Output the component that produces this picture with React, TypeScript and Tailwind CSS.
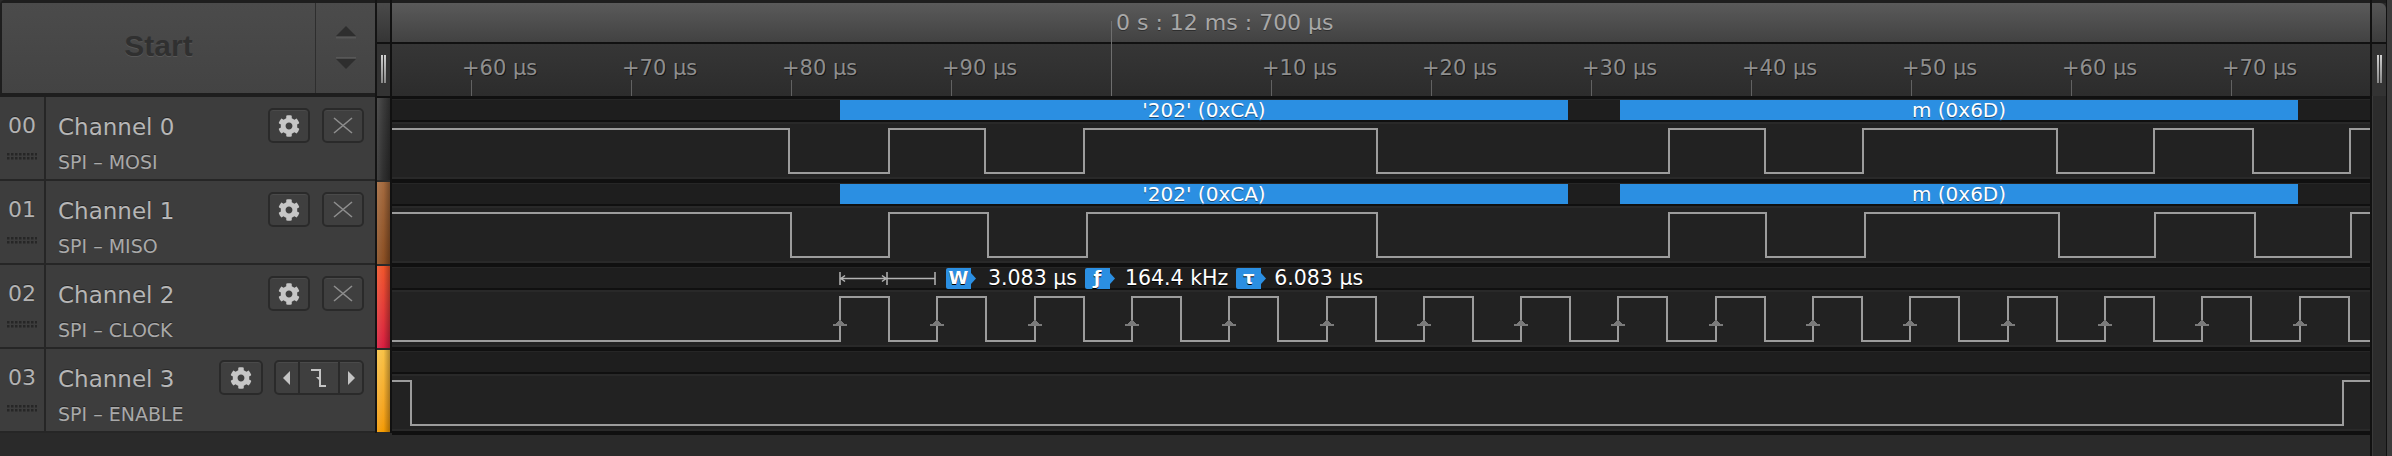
import { FaCog } from "react-icons/fa";

// waveform canvas starts at page x=392 and is 1978px wide
const LEFT = 392;
const WAVE_W = 1978;
const HI = 5;
const LO = 49;

function stepPath(startHigh: boolean, edges: number[]) {
  let level = startHigh;
  const y = (h: boolean) => (h ? HI : LO);
  let d = `M0 ${y(level)}`;
  for (const e of edges) {
    d += ` H${e - LEFT} V${y(!level)}`;
    level = !level;
  }
  return d + ` H${WAVE_W}`;
}

const clockRises = Array.from({ length: 16 }, (_, k) => Math.round(840 + 97.3 * k));
const clockEdges = clockRises.flatMap((r) => [r, Math.round(r + 49.3)]);

const mosi = [789, 889, 985, 1084, 1377, 1669, 1765, 1863, 2057, 2154, 2253, 2350];
const miso = [791, 889, 988, 1087, 1377, 1669, 1766, 1865, 2059, 2155, 2255, 2351];

const rulerLabels = ["+60 µs", "+70 µs", "+80 µs", "+90 µs", "", "+10 µs", "+20 µs", "+30 µs", "+40 µs", "+50 µs", "+60 µs", "+70 µs"];

interface Channel {
  num: string;
  name: string;
  sub: string;
  strip: string;
  path: string;
  bytes?: boolean;
  clock?: boolean;
  trigger?: boolean;
}

const channels: Channel[] = [
  { num: "00", name: "Channel 0", sub: "SPI – MOSI", strip: "bg-linear-to-b from-[#3c3c3c] to-[#2e2e2e]", path: stepPath(true, mosi), bytes: true },
  { num: "01", name: "Channel 1", sub: "SPI – MISO", strip: "bg-linear-to-b from-[#a46a3e] to-[#8a4e22]", path: stepPath(true, miso), bytes: true },
  { num: "02", name: "Channel 2", sub: "SPI – CLOCK", strip: "bg-linear-to-b from-[#f0552a] to-[#d81c40]", path: stepPath(false, clockEdges), clock: true },
  { num: "03", name: "Channel 3", sub: "SPI – ENABLE", strip: "bg-linear-to-b from-[#f8c246] to-[#f39a00]", path: stepPath(true, [411, 2343]), trigger: true },
];

function Grip() {
  return (
    <svg width="30" height="8" viewBox="0 0 30 8">
      {[0, 4, 8, 12, 16, 20, 24, 28].map((x) =>
        [0, 4].map((y) => <rect key={`${x}-${y}`} x={x} y={y} width="2.5" height="2.5" fill="#262626" />)
      )}
    </svg>
  );
}

function Btn({ children, w }: { children: React.ReactNode; w: string }) {
  return (
    <div className={`${w} h-[35px] flex items-center justify-center rounded-[5px] border-2 border-[#2a2a2a] bg-[#3f3f3f] shadow-[inset_0_1px_0_#4a4a4a]`}>
      {children}
    </div>
  );
}

function CloseIcon() {
  return (
    <svg width="20" height="17" viewBox="0 0 20 17">
      <path d="M1 1 L19 16 M19 1 L1 16" stroke="#8e8e8e" strokeWidth="1.6" fill="none" />
    </svg>
  );
}

function ChannelRow({ ch }: { ch: Channel }) {
  return (
    <div className="h-[84px] flex border-b-2 border-[#262626] bg-[#3d3d3d]">
      <div className="w-[46px] shrink-0 border-r-2 border-[#262626] flex flex-col items-center pt-[15px]">
        <span className="text-[22px] leading-[28px] text-[#b2b2b2] [text-shadow:0_-1px_0_#262626]">{ch.num}</span>
        <div className="mt-[13px]">
          <Grip />
        </div>
      </div>
      <div className="flex-1 flex pl-[12px] pr-[11px]">
        <div className="flex-1 flex flex-col pt-[16px]">
          <span className="text-[23px] leading-[28px] text-[#b6b6b6] [text-shadow:0_-1px_0_#262626]">{ch.name}</span>
          <span className="mt-[9px] text-[19px] leading-[24px] text-[#a9a9a9] [text-shadow:0_-1px_0_#262626]">{ch.sub}</span>
        </div>
        {ch.trigger ? (
          <div className="flex gap-[11px] pt-[11px]">
            <Btn w="w-[44px]">
              <FaCog size={22} color="#c6c6c6" />
            </Btn>
            <div className="w-[90px] h-[35px] flex rounded-[5px] border-2 border-[#2a2a2a] bg-[#3f3f3f] overflow-hidden shadow-[inset_0_1px_0_#4a4a4a]">
              <div className="w-[24px] flex items-center justify-center border-r-2 border-[#2a2a2a]">
                <svg width="8" height="14" viewBox="0 0 8 14">
                  <path d="M7 0 V14 L0 7 Z" fill="#c4c4c4" />
                </svg>
              </div>
              <div className="flex-1 flex items-center justify-center border-r-2 border-[#2a2a2a]">
                <svg width="18" height="20" viewBox="0 0 18 20">
                  <path d="M1 2 H10 V18 H16" stroke="#c4c4c4" strokeWidth="2" fill="none" />
                  <path d="M6 9 L10 13 L10 9 Z" fill="#c4c4c4" />
                </svg>
              </div>
              <div className="w-[22px] flex items-center justify-center">
                <svg width="8" height="14" viewBox="0 0 8 14">
                  <path d="M1 0 V14 L8 7 Z" fill="#c4c4c4" />
                </svg>
              </div>
            </div>
          </div>
        ) : (
          <div className="flex gap-[12px] pt-[11px]">
            <Btn w="w-[42px]">
              <FaCog size={22} color="#c6c6c6" />
            </Btn>
            <Btn w="w-[42px]">
              <CloseIcon />
            </Btn>
          </div>
        )}
      </div>
    </div>
  );
}

function Badge({ letter }: { letter: string }) {
  return (
    <div className="flex items-center">
      <div className="w-[25px] h-[21px] flex items-center justify-center rounded-l-[2px] bg-[#2b8fe2] text-[18px] font-bold leading-none text-white">
        {letter}
      </div>
      <svg width="5" height="21" viewBox="0 0 5 21">
        <path d="M0 5 L5 10.5 L0 16 Z" fill="#2b8fe2" />
      </svg>
    </div>
  );
}

function Measurement() {
  return (
    <div className="absolute left-[447px] top-0 h-full flex items-center text-[20.5px] leading-none text-white [text-shadow:0_1px_0_#000]">
      <svg width="97" height="21" viewBox="0 0 97 21">
        <g stroke="#b4b4b4" strokeWidth="1.5" fill="none">
          <path d="M1 4 V17 M48 4 V17 M96 4 V17 M1 10.5 H96" />
          <path d="M6 7.5 L2 10.5 L6 13.5 M43 7.5 L47 10.5 L43 13.5" />
        </g>
      </svg>
      <div className="ml-[10px]">
        <Badge letter="W" />
      </div>
      <span className="ml-[12px]">3.083 µs</span>
      <div className="ml-[8px]">
        <Badge letter="ƒ" />
      </div>
      <span className="ml-[10px]">164.4 kHz</span>
      <div className="ml-[8px]">
        <Badge letter="τ" />
      </div>
      <span className="ml-[8px]">6.083 µs</span>
    </div>
  );
}

function WaveRow({ ch }: { ch: Channel }) {
  return (
    <div className="flex flex-col">
      <div className="relative h-[21px] bg-[#1e1e1e] border-t border-[#262626]">
        {ch.bytes && (
          <>
            <div className="absolute left-[448px] top-0 h-[20px] w-[728px] bg-[#2b8fe2] flex items-center justify-center text-[20px] leading-none text-white [text-shadow:0_1px_0_#1a4f80]">
              &apos;202&apos; (0xCA)
            </div>
            <div className="absolute left-[1228px] top-0 h-[20px] w-[678px] bg-[#2b8fe2] flex items-center justify-center text-[20px] leading-none text-white [text-shadow:0_1px_0_#1a4f80]">
              m (0x6D)
            </div>
          </>
        )}
        {ch.clock && <Measurement />}
      </div>
      <div className="h-[2px] bg-[#101010]" />
      <div className="h-[57px] bg-[#222222] border-t-2 border-b-2 border-[#292929]">
        <svg width={WAVE_W} height="53" viewBox={`0 0 ${WAVE_W} 53`} shapeRendering="crispEdges">
          <path d={ch.path} stroke="#9c9c9c" strokeWidth="2" fill="none" />
          {ch.clock &&
            clockRises.map((r) => (
              <g key={r} fill="#7a7a7a">
                <path d={`M${r - LEFT - 5} 33 L${r - LEFT} 27 L${r - LEFT + 5} 33 Z`} />
                <rect x={r - LEFT - 7} y="32" width="14" height="2" />
              </g>
            ))}
        </svg>
      </div>
      <div className="h-[4px] bg-[#101010]" />
    </div>
  );
}

function Grip2() {
  return (
    <div className="flex gap-px">
      <div className="w-[2px] h-[28px] bg-linear-to-b from-[#d0d0d0] to-[#8a8a8a]" />
      <div className="w-[2px] h-[28px] bg-linear-to-b from-[#d0d0d0] to-[#8a8a8a]" />
    </div>
  );
}

export default function App() {
  return (
    <div className="w-[2392px] h-[456px] flex items-start bg-[#2a2a2a] overflow-hidden font-['DejaVu_Sans',sans-serif]">
      {/* channel list */}
      <div className="w-[375px] shrink-0 flex flex-col">
        <div className="h-[97px] flex border-t-[3px] border-b-4 border-l-2 border-[#1e1e1e] rounded-tl-[5px]">
          <div className="flex-1 flex items-center justify-center pb-[6px] bg-linear-to-b from-[#4b4b4b] to-[#434343] border-r border-[#2e2e2e]">
            <span className="font-['Liberation_Sans',sans-serif] font-bold text-[30px] text-[#303030] [text-shadow:0_1px_0_#575757]">Start</span>
          </div>
          <div className="w-[59px] flex flex-col items-center justify-center gap-[18px] bg-linear-to-b from-[#4b4b4b] to-[#434343]">
            <svg width="22" height="14" viewBox="0 0 22 14">
              <path d="M11 1 L21 11 H1 Z" fill="#2e2e2e" />
              <rect x="1" y="12" width="20" height="1.5" fill="#575757" />
            </svg>
            <svg width="22" height="14" viewBox="0 0 22 14">
              <rect x="1" y="0" width="20" height="1.5" fill="#575757" />
              <path d="M1 2 H21 L11 12 Z" fill="#2e2e2e" />
            </svg>
          </div>
        </div>
        {channels.map((ch) => (
          <ChannelRow key={ch.num} ch={ch} />
        ))}
      </div>
      <div className="w-[2px] h-[433px] bg-[#141414]" />

      {/* colour strips */}
      <div className="w-[13px] flex flex-col">
        <div className="h-[3px] bg-[#1e1e1e]" />
        <div className="h-[39px] bg-linear-to-b from-[#4a4a4a] to-[#353535]" />
        <div className="h-[2px] bg-[#111]" />
        <div className="h-[52px] bg-[#333] flex justify-center pt-[11px]">
          <Grip2 />
        </div>
        <div className="h-[2px] bg-[#111]" />
        {channels.map((ch) => (
          <div key={ch.num} className="h-[84px] border-b-2 border-[#2a2a2a]">
            <div className={`h-full ${ch.strip}`}>
              <div className="h-full bg-linear-to-r from-white/10 via-transparent to-black/30" />
            </div>
          </div>
        ))}
      </div>
      <div className="w-[2px] h-[433px] bg-[#111]" />

      {/* waveforms */}
      <div className="w-[1978px] shrink-0 flex flex-col">
        <div className="relative h-[96px] flex flex-col border-t-[3px] border-[#1e1e1e]">
          <div className="h-[39px] flex items-center pl-[724px] bg-linear-to-b from-[#5a5a5a] to-[#424242]">
            <span className="text-[22px] leading-none text-[#a8a8a8] [text-shadow:0_1px_0_#2e2e2e]">0 s : 12 ms : 700 µs</span>
          </div>
          <div className="h-[2px] bg-[#111]" />
          <div className="h-[52px] flex pl-[79px] overflow-hidden bg-linear-to-b from-[#363636] to-[#2c2c2c]">
            {rulerLabels.map((l, i) => (
              <div key={i} className="relative w-[160px] shrink-0 h-full">
                {l && (
                  <span className="absolute left-[-9px] top-[14px] whitespace-nowrap text-[21px] leading-none text-[#8e8e8e] [text-shadow:1px_1px_0_#161616]">
                    {l}
                  </span>
                )}
                {l && <div className="absolute left-0 bottom-0 h-[16px] w-px bg-[#626262]" />}
              </div>
            ))}
          </div>
          <div className="absolute left-[719px] top-[18px] bottom-0 w-px bg-[#6e6e6e]" />
        </div>
        <div className="h-[3px] bg-[#101010]" />
        {channels.map((ch) => (
          <WaveRow key={ch.num} ch={ch} />
        ))}
      </div>
      <div className="w-[2px] h-[456px] bg-[#111]" />

      {/* scroll column */}
      <div className="w-[14px] h-[456px] flex flex-col">
        <div className="h-[3px] bg-[#1e1e1e]" />
        <div className="h-[39px] rounded-tr-[6px] bg-linear-to-b from-[#555] to-[#3c3c3c]" />
        <div className="h-[2px] bg-[#111]" />
        <div className="h-[52px] bg-[#333] flex justify-center pt-[11px]">
          <Grip2 />
        </div>
        <div className="flex-1 bg-[#2c2c2c] border-l border-[#3a3a3a]" />
      </div>
      <div className="w-px h-[456px] bg-[#111]" />
      <div className="w-[5px] h-[456px] bg-[#3c3c3c]" />
    </div>
  );
}
